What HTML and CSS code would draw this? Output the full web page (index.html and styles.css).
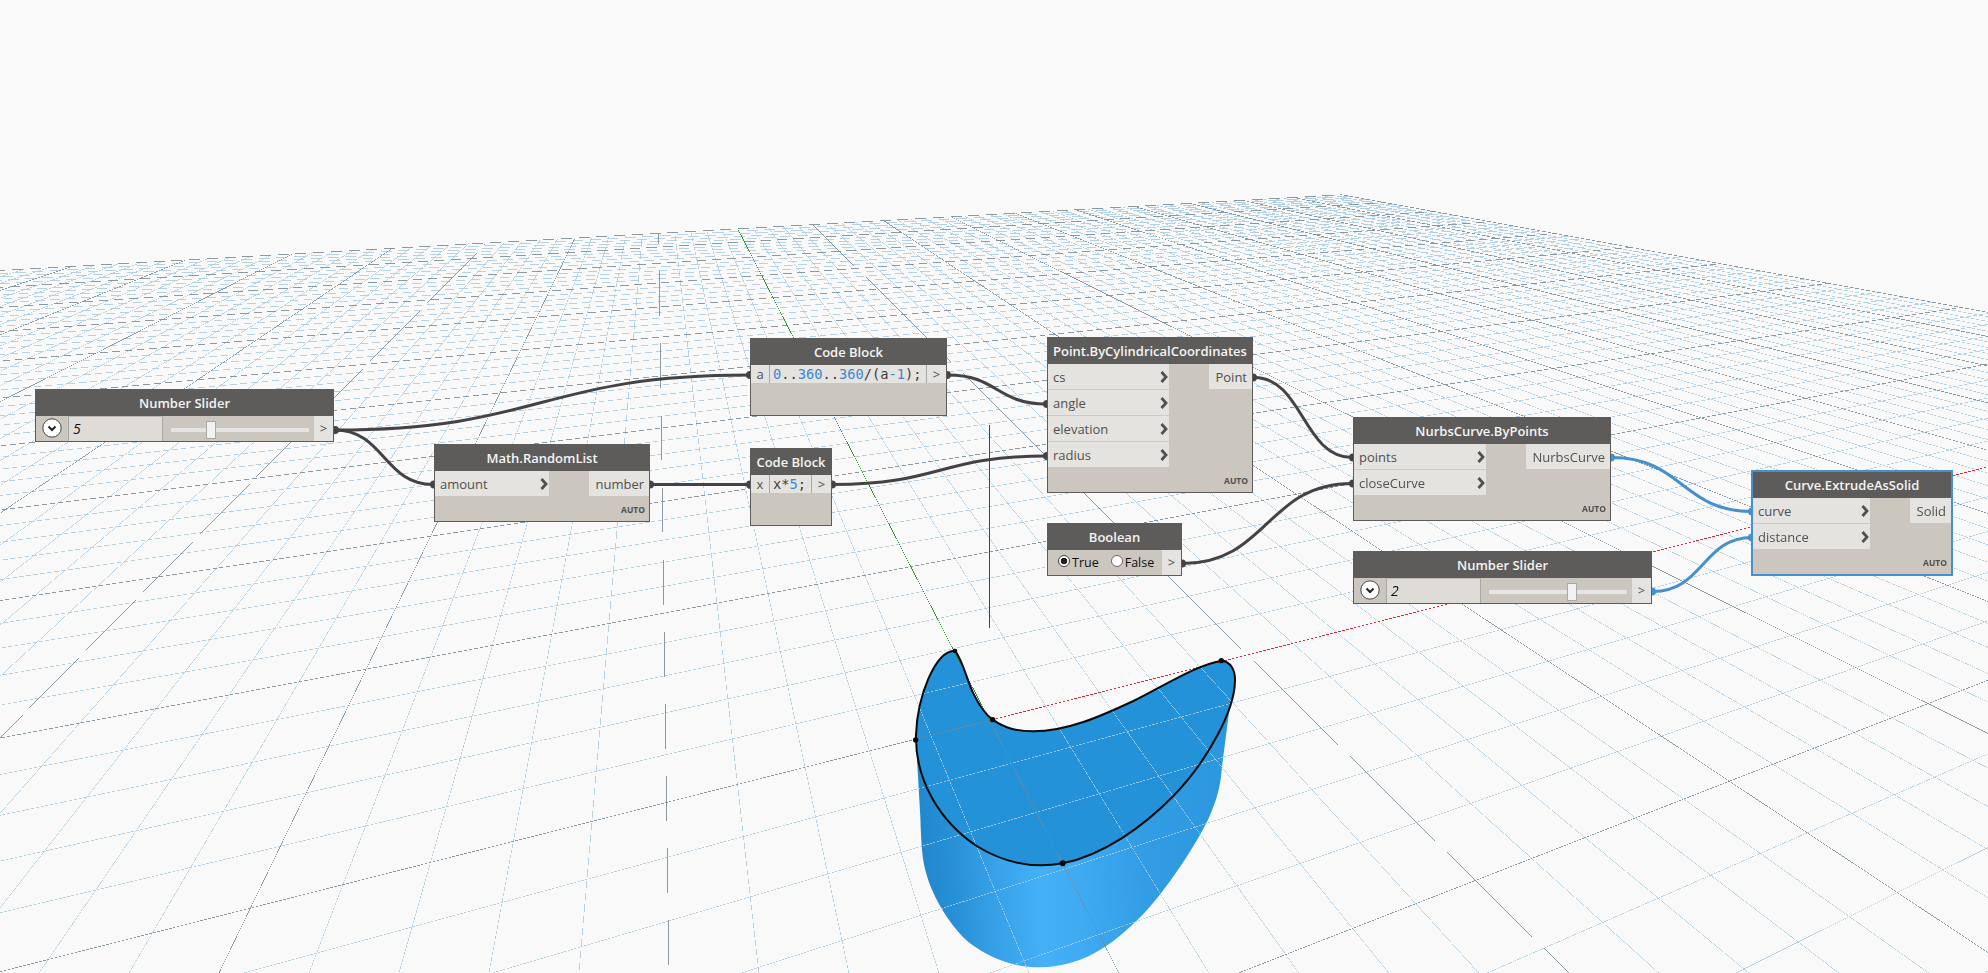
FILE: index.html
```html
<!DOCTYPE html>
<html lang="en">
<head>
<meta charset="utf-8">
<title>Graph workspace</title>
<link rel="stylesheet" href="styles.css">
</head>
<body>
<main class="workspace">
  <svg class="layer" viewBox="0 0 1988 973">
    <defs>
      <linearGradient id="side" gradientUnits="userSpaceOnUse" x1="112" y1="650" x2="1050" y2="600">
        <stop offset="0" stop-color="#2287cb"/>
        <stop offset=".1" stop-color="#268fd6"/>
        <stop offset=".22" stop-color="#359fe6"/>
        <stop offset=".38" stop-color="#43b0f8"/>
        <stop offset=".5" stop-color="#3fabf3"/>
        <stop offset=".72" stop-color="#329de5"/>
        <stop offset="1" stop-color="#2b97dd"/>
      </linearGradient>
    </defs>
    <g transform="translate(880 620) scale(.33333)">
      <path fill="url(#side)" d="M110 400L121 590C123 650 125 710 136 750C155 830 215 925 270 970C335 1020 410 1042 480 1042C600 1040 690 985 790 882C860 808 945 680 985 597C1020 520 1022 480 1026 440L1051 245L600 400Z"/>
      <path fill="#2492d8" d="M225 92C250 125 262 185 280 220C297 255 312 280 338 299C375 325 410 334 460 334C560 334 660 290 760 243C860 193 950 135 1024 122C1052 124 1066 150 1065 182C1064 270 985 420 880 528C790 620 670 705 548 730C440 750 350 715 290 678C180 605 105 480 108 345C112 230 165 92 225 92Z"/>
    </g>
  </svg>
  <canvas class="layer" id="grid" width="1988" height="973"></canvas>
  <svg class="layer" viewBox="0 0 1988 973">
    <g transform="translate(880 620) scale(.33333)">
      <path fill="none" stroke="#0a0a0a" stroke-width="6" d="M225 92C250 125 262 185 280 220C297 255 312 280 338 299C375 325 410 334 460 334C560 334 660 290 760 243C860 193 950 135 1024 122C1052 124 1066 150 1065 182C1064 270 985 420 880 528C790 620 670 705 548 730C440 750 350 715 290 678C180 605 105 480 108 345C112 230 165 92 225 92Z"/>
      <g fill="#0a0a0a"><circle cx="225" cy="93" r="7"/><circle cx="338" cy="299" r="8"/><circle cx="1024" cy="122" r="8"/><circle cx="107" cy="360" r="8"/><circle cx="548" cy="730" r="9"/></g>
    </g>
    <path class="axis-z" d="M989.5 425V628"/>
    <g class="wire">
      <path d="M335 430C541 430 542 375 749 375"/>
      <path d="M335 430C384 430 384 484.500 433 484.500"/>
      <path d="M651 484.500H749"/>
      <path d="M948 375C997 375 997 404 1046 404"/>
      <path d="M833 484.500C940 484.500 940 456 1046 456"/>
      <path d="M1254 377.500C1303 377.500 1303 457.500 1352 457.500"/>
      <path d="M1183 563.500C1267 563.500 1267 483.500 1352 483.500"/>
    </g>
    <g class="wire live">
      <path d="M1612 457.500C1682 457.500 1682 511.500 1752 511.500"/>
      <path d="M1653 591.500C1703 591.500 1703 537.500 1752 537.500"/>
    </g>
    <g class="dot">
      <circle cx="335" cy="430" r="4"/><circle cx="434" cy="484.500" r="4"/><circle cx="650" cy="484.500" r="4"/>
      <circle cx="750" cy="375" r="4"/><circle cx="947" cy="375" r="4"/><circle cx="750" cy="484.500" r="4"/><circle cx="832" cy="484.500" r="4"/>
      <circle cx="1047" cy="404" r="4"/><circle cx="1047" cy="456" r="4"/><circle cx="1253" cy="377.500" r="4"/><circle cx="1182" cy="563.500" r="4"/>
      <circle cx="1353" cy="457.500" r="4"/><circle cx="1353" cy="483.500" r="4"/>
    </g>
    <g class="dot live">
      <circle cx="1611" cy="457.500" r="4"/><circle cx="1652" cy="591.500" r="4"/><circle cx="1752" cy="511.500" r="4"/><circle cx="1752" cy="537.500" r="4"/>
    </g>
  </svg>

  <section class="node slider-a">
    <h2>Number Slider</h2>
    <div class="row">
      <span class="expander"><svg viewBox="0 0 20 20"><circle cx="10" cy="10" r="9.200" fill="#fff" stroke="#444" stroke-width="1"/><path d="M6.500 8.500L10 12L13.500 8.500" fill="none" stroke="#222" stroke-width="2"/></svg></span>
      <span class="value">5</span>
      <span class="slide"><i class="track"><i class="thumb"></i></i></span>
      <span class="out">&gt;</span>
    </div>
  </section>

  <section class="node random">
    <h2>Math.RandomList</h2>
    <div class="ports">
      <ul class="ins"><li>amount<svg viewBox="0 0 8 12"><path d="M1.500 1L6 6L1.500 11"/></svg></li></ul>
      <span class="result">number</span>
    </div>
    <footer>AUTO</footer>
  </section>

  <section class="node code-a">
    <h2>Code Block</h2>
    <div class="code"><span class="var">a</span><code><b>0</b>..<b>360</b>..<b>360</b>/(a<b>-1</b>);</code><span class="go">&gt;</span></div>
  </section>

  <section class="node code-b">
    <h2>Code Block</h2>
    <div class="code"><span class="var">x</span><code>x*<b>5</b>;</code><span class="go">&gt;</span></div>
  </section>

  <section class="node point">
    <h2>Point.ByCylindricalCoordinates</h2>
    <div class="ports">
      <ul class="ins">
        <li>cs<svg viewBox="0 0 8 12"><path d="M1.500 1L6 6L1.500 11"/></svg></li>
        <li>angle<svg viewBox="0 0 8 12"><path d="M1.500 1L6 6L1.500 11"/></svg></li>
        <li>elevation<svg viewBox="0 0 8 12"><path d="M1.500 1L6 6L1.500 11"/></svg></li>
        <li>radius<svg viewBox="0 0 8 12"><path d="M1.500 1L6 6L1.500 11"/></svg></li>
      </ul>
      <span class="result">Point</span>
    </div>
    <footer>AUTO</footer>
  </section>

  <section class="node boolean">
    <h2>Boolean</h2>
    <div class="row">
      <span class="choices"><i class="radio on"></i>True<i class="radio gap"></i>False</span>
      <span class="out">&gt;</span>
    </div>
  </section>

  <section class="node nurbs">
    <h2>NurbsCurve.ByPoints</h2>
    <div class="ports">
      <ul class="ins">
        <li>points<svg viewBox="0 0 8 12"><path d="M1.500 1L6 6L1.500 11"/></svg></li>
        <li>closeCurve<svg viewBox="0 0 8 12"><path d="M1.500 1L6 6L1.500 11"/></svg></li>
      </ul>
      <span class="result">NurbsCurve</span>
    </div>
    <footer>AUTO</footer>
  </section>

  <section class="node slider-b">
    <h2>Number Slider</h2>
    <div class="row">
      <span class="expander"><svg viewBox="0 0 20 20"><circle cx="10" cy="10" r="9.200" fill="#fff" stroke="#444" stroke-width="1"/><path d="M6.500 8.500L10 12L13.500 8.500" fill="none" stroke="#222" stroke-width="2"/></svg></span>
      <span class="value">2</span>
      <span class="slide"><i class="track"><i class="thumb"></i></i></span>
      <span class="out">&gt;</span>
    </div>
  </section>

  <section class="node extrude">
    <h2>Curve.ExtrudeAsSolid</h2>
    <div class="ports">
      <ul class="ins">
        <li>curve<svg viewBox="0 0 8 12"><path d="M1.500 1L6 6L1.500 11"/></svg></li>
        <li>distance<svg viewBox="0 0 8 12"><path d="M1.500 1L6 6L1.500 11"/></svg></li>
      </ul>
      <span class="result">Solid</span>
    </div>
    <footer>AUTO</footer>
  </section>
</main>
<script src="grid.js"></script>
</body>
</html>
```
FILE: styles.css
```css
* { box-sizing: border-box; }
body { margin: 0; background: #f9f9f9; font-family: "Open Sans", "Noto Sans", sans-serif; }
.workspace { position: relative; width: 1988px; height: 973px; overflow: hidden; background: #f9f9f9; }
.layer { position: absolute; inset: 0; width: 1988px; height: 973px; }

.axis-z { fill: none; stroke: #3a2fd0; stroke-width: 1; }
.wire { fill: none; stroke: #444244; stroke-width: 3; }
.wire.live { stroke: #4590cd; }
.dot { fill: #444244; }
.dot.live { fill: #4590cd; }

.node {
  position: absolute;
  display: flex;
  flex-direction: column;
  border: 1px solid #5e5c5a;
  background: #cbc6be;
  color: #505050;
  font-size: 13px;
}
.slider-a { left: 35px; top: 389px; width: 299px; height: 53px; }
.random { left: 434px; top: 444px; width: 216px; height: 78px; }
.code-a { left: 750px; top: 338px; width: 197px; height: 78px; }
.code-b { left: 750px; top: 448px; width: 82px; height: 78px; }
.point { left: 1047px; top: 337px; width: 206px; height: 156px; }
.boolean { left: 1047px; top: 523px; width: 135px; height: 53px; }
.nurbs { left: 1353px; top: 417px; width: 258px; height: 104px; }
.slider-b { left: 1353px; top: 551px; width: 299px; height: 53px; }
.extrude { left: 1751px; top: 470px; width: 202px; height: 106px; border: 2px solid #4590cd; }

.node h2 {
  flex: none;
  height: 26px;
  margin: 0;
  background: #5e5c5a;
  color: #f4f4f2;
  font-size: 13px;
  font-weight: 600;
  line-height: 27px;
  text-align: center;
  white-space: nowrap;
}
.row { display: flex; flex: 1; min-height: 0; }
.expander { display: flex; width: 32px; padding: 0 0 1px 6px; align-items: center; }
.expander svg { width: 20px; height: 20px; }
.value {
  width: 95px;
  padding-left: 4px;
  border: 1px solid #aaa8a4;
  border-top-color: #bdbab6;
  border-bottom: 0;
  background: #dfdcd8;
  color: #111;
  font-size: 14px;
  font-style: italic;
  line-height: 23px;
}
.slide { display: flex; flex: 1; align-items: center; padding: 2px 5px 0 8px; }
.track { position: relative; flex: 1; height: 4px; background: #e5e4e2; }
.thumb { position: absolute; left: 35px; top: -7px; width: 10px; height: 18px; border: 1px solid #aaa8a4; background: #f2f2f2; }
.slider-b .thumb { left: 78px; }
.out { width: 19px; background: #e4e3df; text-align: center; line-height: 25px; }

.ports { display: flex; justify-content: space-between; align-items: flex-start; }
.ins { list-style: none; margin: 0; padding: 0; }
.ins li {
  display: flex;
  justify-content: space-between;
  align-items: center;
  height: 26px;
  padding: 0 1px 0 5px;
  border-bottom: 1px solid #cbcac6;
  background: #e4e3df;
}
.ins li:last-child { height: 25px; border-bottom: 0; }
.ins svg { width: 8px; height: 12px; fill: none; stroke: #505050; stroke-width: 2.8; }
.random .ins { width: 114px; }
.point .ins { width: 121px; }
.nurbs .ins { width: 132px; }
.extrude .ins { width: 117px; }
.result { height: 25px; padding-right: 5px; background: #e4e3df; line-height: 26px; text-align: right; }
.random .result { width: 60px; }
.point .result { width: 43px; }
.nurbs .result { width: 84px; }
.extrude .result { width: 41px; padding-right: 5px; }
.node footer { margin: auto 4px 4px 0; font-size: 8.5px; font-weight: 700; line-height: 14px; text-align: right; }

.code { display: flex; height: 18px; background: #e4e3df; line-height: 19px; }
.code .var { width: 18px; text-align: center; }
.code code {
  flex: 1;
  padding-left: 3px;
  border: solid #aaa8a4;
  border-width: 0 1px;
  color: #3c3c3c;
  font: 13.7px/19px "DejaVu Sans Mono", monospace;
  white-space: nowrap;
}
.code b { color: #3b86d2; font-weight: 400; }
.code .go { width: 19px; text-align: center; }

.choices { display: flex; flex: 1; align-items: center; padding-left: 10px; color: #111; font-size: 12.5px; }
.radio { width: 12px; height: 12px; margin: -3px 2px 0 0; border: 1px solid #666; border-radius: 50%; background: #fff; }
.radio.gap { margin-left: 12px; }
.radio.on { border-color: #444; background: radial-gradient(circle, #222 0 3px, #fff 3.6px); }
```
FILE: grid.js
```js
// Ground plane in perspective: origin, the two vanishing points and their weights.
const ORIGIN = [989.5, 720.4];
const VX = [3550, 70];
const VY = [656.4, 70];
const A = 0.0224;
const B = 0.0619;
const SIZE = 50;

const ctx = document.getElementById('grid').getContext('2d');
const W = 1988;
const H = 973;

function depth(u, v) { return 1 + u * A + v * B; }
function project(u, v) {
  const w = depth(u, v);
  return [
    (ORIGIN[0] + u * A * VX[0] + v * B * VY[0]) / w,
    (ORIGIN[1] + u * A * VX[1] + v * B * VY[1]) / w,
  ];
}

// Thin unsmoothed line: a pixel is set only where the line passes near its centre.
function pixelLine(p, q, color, thickness) {
  ctx.fillStyle = color;
  const steep = Math.abs(q[1] - p[1]) > Math.abs(q[0] - p[0]);
  const k = steep ? 1 : 0;
  if (p[k] > q[k]) [p, q] = [q, p];
  const m = 1 - k;
  const slope = (q[m] - p[m]) / (q[k] - p[k]);
  const width = thickness * Math.hypot(1, slope) ;
  const end = Math.min(q[k], steep ? H : W);
  for (let i = Math.max(0, Math.ceil(p[k])); i < end; i++) {
    const c = p[m] + (i + 0.5 - p[k]) * slope;
    if (c < 0 || c > (steep ? W : H)) continue;
    const f = c - Math.floor(c);
    if (Math.abs(f - 0.5) > width / 2) continue;
    if (steep) ctx.fillRect(Math.floor(c), i, 1, 1);
    else ctx.fillRect(i, Math.floor(c), 1, 1);
  }
}

// Keeps the part of a grid line in front of the viewer.
function gridLine(u0, v0, u1, v1, color) {
  const near = 0.3;
  const w0 = depth(u0, v0);
  const w1 = depth(u1, v1);
  if (w1 < near) return;
  if (w0 < near) {
    const t = (near - w0) / (w1 - w0);
    u0 += (u1 - u0) * t;
    v0 += (v1 - v0) * t;
  }
  pixelLine(project(u0, v0), project(u1, v1), color, 0.62);
}

const MINOR = 'rgba(172,204,222,.88)';
const MAJOR = 'rgba(120,136,147,.85)';
for (const major of [false, true]) {
  for (let n = -SIZE; n <= SIZE; n++) {
    if ((n % 5 === 0) !== major) continue;
    const color = major ? MAJOR : MINOR;
    gridLine(n, -SIZE, n, n === 0 ? 0 : SIZE, color);
    gridLine(-SIZE, n, n === 0 ? 0 : SIZE, n, color);
  }
}
gridLine(0, 0, 0, SIZE, '#2e9030');
gridLine(0, 0, SIZE, 0, '#e0283a');
```
